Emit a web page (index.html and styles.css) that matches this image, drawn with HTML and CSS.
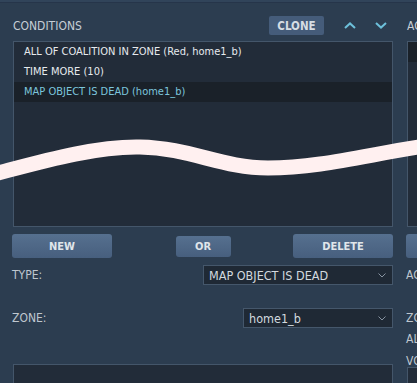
FILE: index.html
```html
<!DOCTYPE html>
<html lang="en">
  <head>
    <meta charset="UTF-8" />
    <title>Trigger Editor</title>
    <link rel="stylesheet" href="styles.css">
  </head>
  <body>
    <div class="editor">
      <!-- Conditions column -->
      <section class="panel">
        <div class="panel-head">
          <span class="panel-title">CONDITIONS</span>
          <button class="clone-btn">CLONE</button>
          <button class="arrow-btn up-btn">
            <svg width="12" height="7" viewBox="0 0 12 7"><path d="M1 6 L6 1.4 L11 6" /></svg>
          </button>
          <button class="arrow-btn">
            <svg width="12" height="7" viewBox="0 0 12 7"><path d="M1 1 L6 5.6 L11 1" /></svg>
          </button>
        </div>

        <ul class="item-list">
          <li>ALL OF COALITION IN ZONE (Red, home1_b)</li>
          <li>TIME MORE (10)</li>
          <li class="selected">MAP OBJECT IS DEAD (home1_b)</li>
        </ul>

        <div class="list-buttons">
          <button class="btn btn-wide">NEW</button>
          <button class="btn btn-small">OR</button>
          <button class="btn btn-wide">DELETE</button>
        </div>

        <div class="field type-field">
          <span class="field-label">TYPE:</span>
          <div class="select select-type">
            <span>MAP OBJECT IS DEAD</span>
            <svg width="8" height="5" viewBox="0 0 8 5"><path d="M0.5 0.5 L4 4 L7.5 0.5" /></svg>
          </div>
        </div>

        <div class="field zone-field">
          <span class="field-label">ZONE:</span>
          <div class="select select-zone">
            <span>home1_b</span>
            <svg width="8" height="5" viewBox="0 0 8 5"><path d="M0.5 0.5 L4 4 L7.5 0.5" /></svg>
          </div>
        </div>

        <div class="details-box"></div>
      </section>

      <!-- Actions column (cut off on the right) -->
      <section class="panel panel-actions">
        <div class="panel-head">
          <span class="panel-title">ACTIONS</span>
        </div>

        <ul class="item-list">
          <li class="selected">&nbsp;</li>
        </ul>

        <div class="list-buttons">
          <button class="btn btn-wide">NEW</button>
        </div>

        <div class="field type-field">
          <span class="field-label">ACTION:</span>
        </div>
        <div class="field zone-field">
          <span class="field-label">ZONE:</span>
        </div>
        <div class="field-line">ALL</div>
        <div class="field-line">VOICE:</div>

        <div class="details-box small-box"></div>
      </section>
    </div>

    <!-- torn-screenshot marker -->
    <svg class="tear" width="417" height="383" viewBox="0 0 417 383">
      <path d="M-6 172 C40 160 95 144 140 145 C190 146 222 166 268 166 C320 166 370 152 425 144" />
    </svg>
  </body>
</html>
```

FILE: styles.css
```css
/* Global */
body {
  margin: 0;
  background: #2c3d50;
  font-family: "DejaVu Sans Condensed", "DejaVu Sans", sans-serif;
  font-stretch: condensed;
  color: #e6eaee;
  width: 417px;
  height: 383px;
  overflow: hidden;
  position: relative;
  border-top: 2px solid #31445a;
  box-sizing: border-box;
}

.editor {
  display: flex;
  gap: 13px;
  padding-left: 12px;
  border-top: 1px solid #26354a;
}

.panel {
  width: 381px;
  flex-shrink: 0;
  display: flex;
  flex-direction: column;
}

.panel-actions {
  width: 381px;
}

/* Header row */
.panel-head {
  display: flex;
  align-items: center;
  height: 19px;
  margin-top: 13px;
}

.panel-title {
  font-size: 12px;
  color: #c6ced6;
  padding-left: 1px;
  flex: 1;
}

.clone-btn {
  width: 55px;
  height: 19px;
  background: #455c7a;
  border: none;
  border-radius: 2px;
  color: #d6dde4;
  font-family: inherit;
  font-stretch: condensed;
  font-weight: bold;
  font-size: 11.5px;
  padding: 0;
  margin-right: 14px;
}

.arrow-btn {
  width: 24px;
  height: 19px;
  background: none;
  border: none;
  padding: 0;
  display: flex;
  align-items: center;
  justify-content: center;
}

.up-btn {
  margin-right: 7px;
}

.arrow-btn path {
  fill: none;
  stroke: #6dc0da;
  stroke-width: 2;
}

/* List */
.item-list {
  list-style: none;
  margin: 6px 0 0 1px;
  padding: 0;
  height: 184px;
  background: #222c39;
  border: 1px solid #44566a;
}

.item-list li {
  height: 20px;
  line-height: 20px;
  padding-left: 10px;
  font-size: 11px;
  white-space: nowrap;
}

.item-list li.selected {
  background: #1a2129;
  color: #7cc5dc;
}

/* Buttons under list */
.list-buttons {
  display: flex;
  justify-content: space-between;
  align-items: center;
  margin-top: 7px;
  height: 24px;
}

.btn {
  border: none;
  border-radius: 3px;
  background: linear-gradient(#56708f, #475f7e);
  color: #e0e6eb;
  font-family: inherit;
  font-stretch: condensed;
  font-weight: bold;
  font-size: 11px;
  padding: 0;
}

.btn-wide {
  width: 100px;
  height: 24px;
}

.btn-small {
  width: 55px;
  height: 21px;
  margin-left: 1px;
}

/* Fields */
.field {
  display: flex;
  justify-content: space-between;
  align-items: center;
  height: 20px;
}

.type-field {
  margin-top: 7px;
}

.zone-field {
  margin-top: 23px;
}

.field-label {
  font-size: 12px;
  color: #bfc7cf;
}

.select {
  display: flex;
  justify-content: space-between;
  align-items: center;
  box-sizing: border-box;
  height: 20px;
  padding: 0 6px 0 5px;
  background: #1f2935;
  border: 1px solid #45576b;
  font-size: 12.5px;
  color: #d3d9df;
}

.select path {
  fill: none;
  stroke: #8793a1;
  stroke-width: 1;
}

.select-type {
  width: 190px;
}

.select-zone {
  width: 150px;
}

.details-box {
  margin: 36px 0 0 1px;
  height: 40px;
  background: #222c39;
  border: 1px solid #44566a;
}

/* right column bits */
.field-line {
  font-size: 12px;
  color: #bfc7cf;
  height: 22px;
  line-height: 22px;
}

.small-box {
  margin-top: -5px;
}

/* Overlay marker */
.tear {
  position: absolute;
  left: 0;
  top: 0;
  pointer-events: none;
}

.tear path {
  fill: none;
  stroke: #fff0f0;
  stroke-width: 15;
}
```
